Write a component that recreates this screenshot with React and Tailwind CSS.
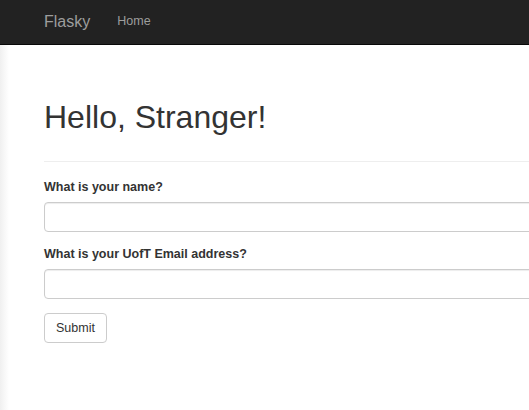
import React from 'react';

export default function App() {
  return (
    <div
      className="min-h-[410px] overflow-hidden bg-[linear-gradient(to_right,#f0f0f0,#ffffff_9px)] text-[#333] font-['Liberation_Sans',Arial,sans-serif]"
    >
      {/* Navbar */}
      <nav className="h-[45px] bg-[#222] border-b border-[#080808] flex items-center pl-[44px]">
        <a className="text-[16px] text-[#9d9d9d] leading-none">Flasky</a>
        <a className="ml-[27px] text-[12.5px] text-[#9d9d9d] leading-none -mt-[2px]">Home</a>
      </nav>

      {/* Page */}
      <div className="pl-[44px]">
        <div className="w-[700px] border-b border-[#eee] pt-[54px] pb-[26px]">
          <h1 className="text-[32px] leading-[36px] font-normal text-[#333]">Hello, Stranger!</h1>
        </div>

        <form className="w-[700px] pt-[16px]">
          <div className="mb-[13px]">
            <label className="block text-[12.5px] font-bold leading-[18px] mb-[6px]">What is your name?</label>
            <input
              type="text"
              className="block w-full h-[30px] border border-[#ccc] rounded-[4px] bg-white shadow-[inset_0_1px_1px_rgba(0,0,0,0.075)] outline-none"
            />
          </div>
          <div className="mb-[14px]">
            <label className="block text-[12.5px] font-bold leading-[18px] mb-[6px]">What is your UofT Email address?</label>
            <input
              type="text"
              className="block w-full h-[30px] border border-[#ccc] rounded-[4px] bg-white shadow-[inset_0_1px_1px_rgba(0,0,0,0.075)] outline-none"
            />
          </div>
          <button
            type="submit"
            className="h-[30px] px-[11px] border border-[#ccc] rounded-[4px] bg-white text-[12.5px] text-[#333]"
          >
            Submit
          </button>
        </form>
      </div>
    </div>
  );
}
